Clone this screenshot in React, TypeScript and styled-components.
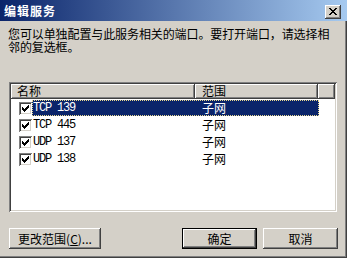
import React from 'react';
import styled, {createGlobalStyle} from 'styled-components';

const GlobalStyle = createGlobalStyle`
	html, body {
		margin: 0;
		padding: 0;
		background: #d4d0c8;
	}
	* {
		box-sizing: border-box;
	}
`;

const cjk = `"Noto Sans CJK SC", "Liberation Sans", sans-serif`;

const Window = styled.div`
	width: 347px;
	height: 258px;
	display: flex;
	flex-direction: column;
	background: #d4d0c8;
	box-shadow: inset -1px -1px #404040, inset -2px -2px #808080;
	font-family: ${cjk};
	font-size: 12px;
	color: #000;
	overflow: hidden;
`;

const TitleBar = styled.div`
	height: 21px;
	flex: none;
	display: flex;
	align-items: center;
	justify-content: space-between;
	padding: 0 6px 0 4px;
	background: linear-gradient(to right, #0a246a, #a6caf0);
`;

const Title = styled.span`
	color: #fff;
	font-weight: bold;
	font-size: 12px;
	letter-spacing: 1px;
	line-height: 14px;
`;

const CloseButton = styled.div`
	width: 16px;
	height: 14px;
	margin-top: 2px;
	display: flex;
	align-items: center;
	justify-content: center;
	background: #d4d0c8;
	box-shadow: inset -1px -1px #404040, inset 1px 1px #fff,
		inset -2px -2px #808080;
`;

const Content = styled.div`
	flex: 1;
	display: flex;
	flex-direction: column;
	padding: 6px 10px 0 9px;
`;

const Prompt = styled.p`
	margin: 0 0 0 -1px;
	line-height: 13px;
	height: 26px;
`;

const PromptLine = styled.span`
	display: block;
	height: 13px;
	white-space: nowrap;
	letter-spacing: -0.1px;
`;

const ListBox = styled.div`
	margin-top: 29px;
	width: 328px;
	height: 130px;
	padding: 2px;
	background: #fff;
	box-shadow: inset 1px 1px #808080, inset -1px -1px #fff,
		inset 2px 2px #404040, inset -2px -2px #d4d0c8;
`;

const Header = styled.div`
	display: flex;
	height: 15px;
	background: #d4d0c8;
`;

const HeaderCell = styled.div<{$w?: number}>`
	${(p) => (p.$w ? `width: ${p.$w}px;` : 'flex: 1;')}
	height: 15px;
	padding-left: ${(p) => (p.$w === 184 ? 6 : 7)}px;
	line-height: 14px;
	box-shadow: inset -1px -1px #404040, inset 1px 1px #fff,
		inset -2px -2px #808080;
`;

const Rows = styled.div`
	padding-top: 1px;
`;

const Row = styled.div`
	height: 17px;
	display: flex;
	align-items: flex-start;
`;

const Check = styled.div`
	width: 13px;
	height: 13px;
	margin: 2px 0 0 8px;
	background: #fff;
	box-shadow: inset 1px 1px #808080, inset -1px -1px #fff,
		inset 2px 2px #404040, inset -2px -2px #d4d0c8;
	display: flex;
	align-items: center;
	justify-content: center;
`;

const RowBody = styled.div<{$selected?: boolean}>`
	display: flex;
	height: 16px;
	width: 287px;
	line-height: 16px;
	background: ${(p) => (p.$selected ? '#0a246a' : 'transparent')};
	color: ${(p) => (p.$selected ? '#fff' : '#000')};
	outline: ${(p) => (p.$selected ? '1px dotted #e8d890' : 'none')};
	outline-offset: -1px;
`;

const NameCell = styled.span`
	width: 163px;
	padding-left: 1px;
	font-family: "Liberation Mono", ${cjk};
	font-size: 12px;
	letter-spacing: -1.2px;
`;

const RangeCell = styled.span`
	padding-left: 7px;
`;

const ButtonRow = styled.div`
	display: flex;
	justify-content: space-between;
	margin-top: 16px;
`;

const Group = styled.div`
	display: flex;
	gap: 6px;
	margin-right: -1px;
`;

const Button = styled.div<{$w?: number; $default?: boolean}>`
	width: ${(p) => p.$w ?? 75}px;
	height: 21px;
	display: flex;
	align-items: center;
	justify-content: center;
	background: #d4d0c8;
	border: ${(p) => (p.$default ? '1px solid #000' : 'none')};
	box-shadow: inset -1px -1px #404040, inset 1px 1px #fff,
		inset -2px -2px #808080;
	line-height: 14px;
	white-space: nowrap;
`;

const Underline = styled.span`
	text-decoration: underline;
`;

const rows = [
	{name: 'TCP 139', selected: true},
	{name: 'TCP 445'},
	{name: 'UDP 137'},
	{name: 'UDP 138'},
];

const CheckMark = () => (
	<svg width='7' height='7' viewBox='0 0 7 7' shapeRendering='crispEdges'>
		<path d='M6 0h1v3h-1v1h-1v1h-1v1h-1v1h-1v-1h-1v-1h-1v-3h1v1h1v1h1v-1h1v-1h1z' fill='#000' />
	</svg>
);

const App: React.FC = () => {
	return (
		<>
			<GlobalStyle />
			<Window>
				<TitleBar>
					<Title>编辑服务</Title>
					<CloseButton>
						<svg width='8' height='7' viewBox='0 0 8 7' shapeRendering='crispEdges'>
							<path d='M0 0h2v1h1v1h2v-1h1v-1h2v1h-1v1h-1v1h-1v1h1v1h1v1h1v1h-2v-1h-1v-1h-2v1h-1v1h-2v-1h1v-1h1v-1h1v-1h-1v-1h-1v-1h-1z' fill='#000' />
						</svg>
					</CloseButton>
				</TitleBar>
				<Content>
					<Prompt>
						<PromptLine>您可以单独配置与此服务相关的端口。要打开端口，请选择相</PromptLine>
						<PromptLine>邻的复选框。</PromptLine>
					</Prompt>
					<ListBox>
						<Header>
							<HeaderCell $w={184}>名称</HeaderCell>
							<HeaderCell $w={123}>范围</HeaderCell>
							<HeaderCell />
						</Header>
						<Rows>
							{rows.map((r) => (
								<Row key={r.name}>
									<Check>
										<CheckMark />
									</Check>
									<RowBody $selected={r.selected}>
										<NameCell>{r.name}</NameCell>
										<RangeCell>子网</RangeCell>
									</RowBody>
								</Row>
							))}
						</Rows>
					</ListBox>
					<ButtonRow>
						<Button $w={92}>
							更改范围(<Underline>C</Underline>)...
						</Button>
						<Group>
							<Button $default>确定</Button>
							<Button>取消</Button>
						</Group>
					</ButtonRow>
				</Content>
			</Window>
		</>
	);
};

export default App;
